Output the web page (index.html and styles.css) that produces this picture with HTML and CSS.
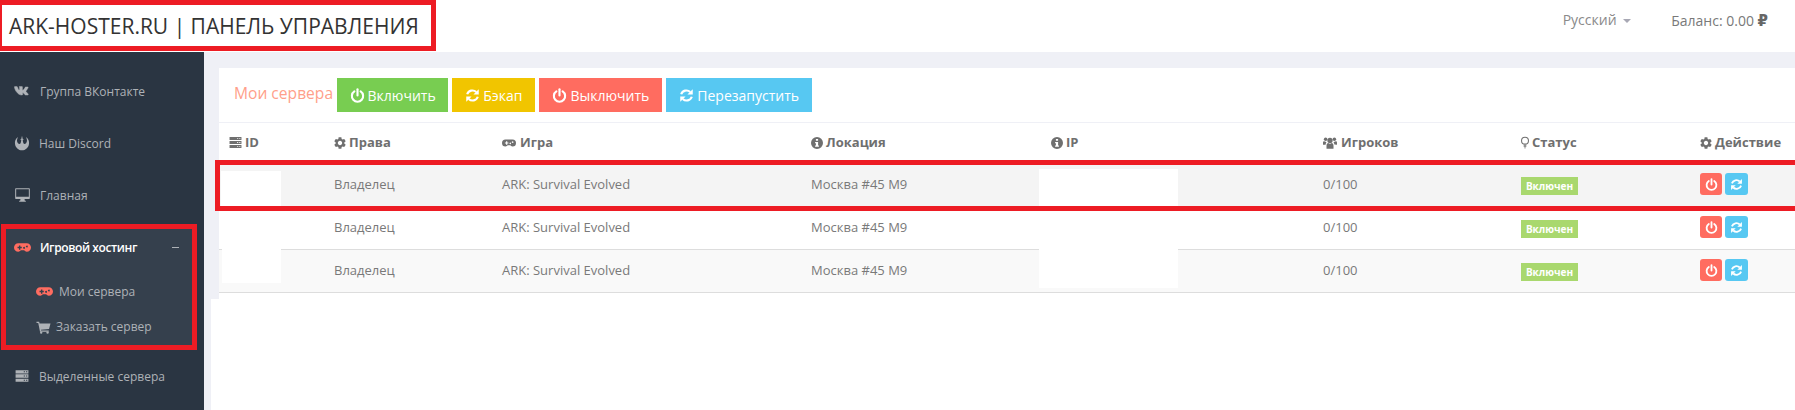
FILE: index.html
```html
<!DOCTYPE html>
<html lang="ru">
<head>
  <meta charset="UTF-8" />
  <meta name="viewport" content="width=device-width, initial-scale=1.0"/>
  <title>ARK-HOSTER.RU | Панель управления</title>
  <link rel="stylesheet" href="styles.css">
</head>
<body>
  <svg class="sprite" xmlns="http://www.w3.org/2000/svg">
    <symbol id="i-vk" viewBox="0 0 24 14"><path stroke="currentColor" stroke-width=".6" d="M1 .8h3.200c.3 0 .5.2.6.5.9 2.500 2 4.400 2.600 4.400.3 0 .4-.2.4-1V2.600c0-1-.6-1.100-.6-1.500 0-.2.2-.3.4-.3h3.800c.4 0 .5.2.5.6v4.100c0 .4.2.6.3.6.4 0 .8-.3 1.500-1.100 1.200-1.300 2-3.200 2-3.200.1-.3.3-.5.7-.5h3c.6 0 .7.3.6.7-.3 1.500-3.200 4.900-3.200 5.300 0 .3.100.5.400.800 2.500 2.500 3 3.500 3 4 0 .3-.2.6-.7.6h-3c-.8 0-1.200-.9-3-2.700-.5-.4-.7-.5-.9-.5-.3 0-.4.2-.4.700v1.800c0 .5-.2.7-1.500.7-2.600 0-5-1.500-6.900-4.300C2.300 7.500 1 4 .5 1.500.5 1.100.7.800 1 .8z"/></symbol>
    <symbol id="i-rebel" viewBox="0 0 24 24"><path d="M6 3C2 6 1 10 1.500 13 2 19 7 23 12 23s10-4 10.500-10c.5-3-.5-7-4.500-10 2 4 2 7 0 9.500-1.500 1.500-3.500 1-4-.5l-1-4 2-1-1.800-.5L12 1l-1.200 5.500L9 7l2 1-1 4c-.5 1.500-2.500 2-4 .5C4 10 4 7 6 3z"/></symbol>
    <symbol id="i-desktop" viewBox="0 0 24 24"><path fill-rule="evenodd" d="M2 2h20a1 1 0 0 1 1 1v14a1 1 0 0 1-1 1h-7l.5 2.500H17V22H7v-1.500h1.500L9 18H2a1 1 0 0 1-1-1V3a1 1 0 0 1 1-1zM2.500 3.500v11h19v-11z"/></symbol>
    <symbol id="i-gamepad" viewBox="0 0 24 12"><path fill-rule="evenodd" d="M6 0h12a6 6 0 0 1 0 12c-2 0-3-1.500-4-2h-4c-1 .5-2 2-4 2A6 6 0 0 1 6 0zM5 5v2h2v2h2V7h2V5H9V3H7v2zm10.500 1.500a1.300 1.300 0 1 0 0 .01zm4-2a1.300 1.300 0 1 0 0 .01z"/></symbol>
    <symbol id="i-cart" viewBox="0 0 24 24"><path d="M0 3h4.500l.8 3H24l-2.500 9.500-14 1 .4 1.500H21v2H6L3 5H0z"/><circle cx="8" cy="21.500" r="2"/><circle cx="19" cy="21.500" r="2"/></symbol>
    <symbol id="i-server" viewBox="0 0 24 24"><path fill-rule="evenodd" d="M1 2h22v5.500H1zM15 4v1.500h2V4zm4 0v1.500h2V4zM1 9.200h22v5.600H1zm14 2v1.500h2v-1.500zm4 0v1.500h2v-1.500zM1 16.500h22V22H1zm14 2V20h2v-1.500zm4 0V20h2v-1.500z"/></symbol>
    <symbol id="i-gear" viewBox="2 2 20 20"><path d="M19.140 12.940c.04-.3.06-.61.06-.94 0-.32-.02-.64-.07-.94l2.030-1.580c.18-.14.23-.41.12-.61l-1.920-3.320c-.12-.22-.37-.29-.59-.22l-2.390.96c-.5-.38-1.030-.7-1.620-.94l-.36-2.540c-.04-.24-.24-.41-.48-.41h-3.840c-.24 0-.43.17-.47.41l-.36 2.540c-.59.24-1.130.57-1.620.94l-2.390-.96c-.22-.08-.47 0-.59.22L2.740 8.870c-.12.21-.08.47.12.61l2.030 1.580c-.05.3-.09.63-.09.94s.02.64.07.94l-2.030 1.580c-.18.14-.23.41-.12.61l1.920 3.320c.12.22.37.29.59.22l2.390-.96c.5.38 1.030.7 1.620.94l.36 2.540c.05.24.24.41.48.41h3.840c.24 0 .44-.17.47-.41l.36-2.540c.59-.24 1.130-.56 1.620-.94l2.390.96c.22.08.47 0 .59-.22l1.920-3.320c.12-.22.07-.47-.12-.61l-2.010-1.580zM12 15.600c-1.980 0-3.600-1.620-3.600-3.600s1.620-3.600 3.600-3.600 3.600 1.620 3.600 3.600-1.620 3.600-3.600 3.600z"/></symbol>
    <symbol id="i-info" viewBox="1 1 22 22"><path fill-rule="evenodd" d="M12 1a11 11 0 1 1 0 22 11 11 0 0 1 0-22zM10 4.500V8h4V4.500zM8.500 10v2.500H10v4H8.500V19h7v-2.500H14V10z"/></symbol>
    <symbol id="i-users" viewBox="0 1 24 21"><circle cx="12" cy="8" r="4.500"/><circle cx="4.500" cy="6" r="3"/><circle cx="19.500" cy="6" r="3"/><path d="M6 22v-5c0-3 1.500-4.500 3-4.500 1 .8 2 1.200 3 1.200s2-.4 3-1.200c1.500 0 3 1.500 3 4.500v5zM0 15.500V12c0-2 1-2.500 2-2.500.8.500 1.700.8 2.500.8l1.500 1C5 12 4.500 13.500 4.500 15.500zM24 15.500V12c0-2-1-2.500-2-2.500-.8.500-1.700.8-2.500.8l-1.500 1c1 .7 1.500 2.200 1.500 3.700z"/></symbol>
    <symbol id="i-bulb" viewBox="4.500 1 15 22"><circle cx="12" cy="8.500" r="6.500" fill="none" stroke="currentColor" stroke-width="2"/><path d="M9.500 16h5v2h-5zM9.500 19h5v1.500h-5zM10.500 21.500h3V23h-3z"/></symbol>
    <symbol id="i-power" viewBox="0 0 24 24"><path d="M7 5.500a9 9 0 1 0 10 0" fill="none" stroke="currentColor" stroke-width="3.400" stroke-linecap="round"/><path d="M12 2v10" fill="none" stroke="currentColor" stroke-width="3.400" stroke-linecap="round"/></symbol>
    <symbol id="i-refresh" viewBox="0 0 24 24"><path d="M3.500 10A8.800 8.800 0 0 1 18 6.500M20.500 14A8.800 8.800 0 0 1 6 17.500" fill="none" stroke="currentColor" stroke-width="3.400"/><path d="M22 2v8.500h-8.500zM2 22v-8.500h8.500z"/></symbol>
  </svg>

  <header class="topbar">
    <div class="logo">ARK-HOSTER.RU | ПАНЕЛЬ УПРАВЛЕНИЯ</div>
    <div class="top-right">
      <span class="lang">Русский <i class="caret"></i></span>
      <span>Баланс: 0.00 <b class="rub">₽</b></span>
    </div>
  </header>

  <div class="layout">
    <nav class="sidebar">
      <a class="nav-item"><svg class="ico ico-vk"><use href="#i-vk"/></svg>Группа ВКонтакте</a>
      <a class="nav-item"><svg class="ico ico-rebel"><use href="#i-rebel"/></svg>Наш Discord</a>
      <a class="nav-item"><svg class="ico ico-desktop"><use href="#i-desktop"/></svg>Главная</a>

      <div class="nav-group">
        <a class="nav-head"><svg class="ico ico-pad"><use href="#i-gamepad"/></svg>Игровой хостинг<span class="minus"></span></a>
        <a class="sub-item sub-first"><svg class="ico ico-pad"><use href="#i-gamepad"/></svg>Мои сервера</a>
        <a class="sub-item"><svg class="ico ico-cart"><use href="#i-cart"/></svg>Заказать сервер</a>
      </div>

      <a class="nav-item"><svg class="ico ico-server"><use href="#i-server"/></svg>Выделенные сервера</a>
    </nav>

    <main class="main">
      <div class="content">
        <section class="panel">
          <div class="panel-head">
            <span class="panel-title">Мои сервера</span>
            <a class="btn btn-green"><svg class="btn-ico"><use href="#i-power"/></svg>Включить</a>
            <a class="btn btn-yellow"><svg class="btn-ico"><use href="#i-refresh"/></svg>Бэкап</a>
            <a class="btn btn-red"><svg class="btn-ico"><use href="#i-power"/></svg>Выключить</a>
            <a class="btn btn-blue"><svg class="btn-ico"><use href="#i-refresh"/></svg>Перезапустить</a>
          </div>

          <table class="servers">
            <colgroup>
              <col class="c-id"><col class="c-rights"><col class="c-game"><col class="c-loc">
              <col class="c-ip"><col class="c-players"><col class="c-status"><col class="c-act">
            </colgroup>
            <thead>
              <tr>
                <th><svg class="th-ico th-server"><use href="#i-server"/></svg>ID</th>
                <th><svg class="th-ico"><use href="#i-gear"/></svg>Права</th>
                <th><svg class="th-ico th-pad"><use href="#i-gamepad"/></svg>Игра</th>
                <th><svg class="th-ico"><use href="#i-info"/></svg>Локация</th>
                <th><svg class="th-ico"><use href="#i-info"/></svg>IP</th>
                <th><svg class="th-ico th-users"><use href="#i-users"/></svg>Игроков</th>
                <th><svg class="th-ico th-bulb"><use href="#i-bulb"/></svg>Статус</th>
                <th><svg class="th-ico"><use href="#i-gear"/></svg>Действие</th>
              </tr>
            </thead>
            <tbody>
              <tr class="row-a">
                <td></td><td>Владелец</td><td>ARK: Survival Evolved</td><td>Москва #45 M9</td><td></td><td>0/100</td>
                <td><span class="badge">Включен</span></td>
                <td><span class="acts"><a class="act act-red"><svg class="act-ico"><use href="#i-power"/></svg></a><a class="act act-blue"><svg class="act-ico"><use href="#i-refresh"/></svg></a></span></td>
              </tr>
              <tr>
                <td></td><td>Владелец</td><td>ARK: Survival Evolved</td><td>Москва #45 M9</td><td></td><td>0/100</td>
                <td><span class="badge">Включен</span></td>
                <td><span class="acts"><a class="act act-red"><svg class="act-ico"><use href="#i-power"/></svg></a><a class="act act-blue"><svg class="act-ico"><use href="#i-refresh"/></svg></a></span></td>
              </tr>
              <tr class="row-c">
                <td></td><td>Владелец</td><td>ARK: Survival Evolved</td><td>Москва #45 M9</td><td></td><td>0/100</td>
                <td><span class="badge">Включен</span></td>
                <td><span class="acts"><a class="act act-red"><svg class="act-ico"><use href="#i-power"/></svg></a><a class="act act-blue"><svg class="act-ico"><use href="#i-refresh"/></svg></a></span></td>
              </tr>
            </tbody>
          </table>

          <!-- white patches hiding ids and ips -->
          <div class="patch patch-id1"></div>
          <div class="patch patch-id3"></div>
          <div class="patch patch-ip1"></div>
          <div class="patch patch-ip2"></div>
          <div class="row-mark"></div>
        </section>
      </div>
      <div class="below"></div>
    </main>
  </div>
</body>
</html>
```

FILE: styles.css
```css
html, body {
  margin: 0;
  height: 100%;
  overflow: hidden;
}

body {
  font-family: "Open Sans", "DejaVu Sans", sans-serif;
  font-size: 12px;
  color: #797979;
  background: #fff;
  display: flex;
  flex-direction: column;
}

.sprite {
  display: none;
}

/* top bar */
.topbar {
  height: 52px;
  flex: none;
  display: flex;
  justify-content: space-between;
  background: #fff;
}

.logo {
  box-sizing: border-box;
  width: 436px;
  height: 51px;
  border: 5px solid #ed1c24;
  border-left-width: 2px;
  padding-left: 7px;
  display: flex;
  align-items: center;
  font-size: 21px;
  color: #333;
  white-space: nowrap;
}

.top-right {
  display: flex;
  gap: 40px;
  padding: 11px 27px 0 0;
  font-size: 14px;
  line-height: 18px;
}

.lang {
  color: #8a8a8a;
}

.rub {
  font-size: 15px;
  color: #666;
}

.caret {
  display: inline-block;
  margin-left: 3px;
  vertical-align: middle;
  border-top: 4px solid #a8a8b4;
  border-left: 4px solid transparent;
  border-right: 4px solid transparent;
}

/* layout */
.layout {
  flex: 1;
  display: flex;
  min-height: 0;
}

.sidebar {
  width: 204px;
  flex: none;
  box-sizing: border-box;
  padding-top: 13px;
  background: #2a3542;
  color: #aeb2b7;
}

.nav-item {
  height: 52px;
  display: flex;
  align-items: center;
  padding-left: 14px;
}

.ico {
  flex: none;
  fill: currentColor;
}

.ico-vk {
  width: 17px;
  height: 10px;
  margin-right: 9px;
}

.ico-rebel {
  width: 16px;
  height: 16px;
  margin-right: 9px;
}

.ico-desktop {
  width: 17px;
  height: 16px;
  margin-right: 9px;
}

.ico-pad {
  width: 17px;
  height: 9px;
  margin-right: 9px;
  color: #ff6c60;
}

.ico-cart {
  width: 15px;
  height: 14px;
  margin-right: 5px;
}

.ico-server {
  width: 16px;
  height: 14px;
  margin-right: 9px;
}

.nav-group {
  box-sizing: border-box;
  width: 196px;
  height: 126px;
  margin: 3px 0 0 1px;
  border: 5px solid #ed1c24;
  background: #35404d;
}

.nav-head {
  height: 37px;
  display: flex;
  align-items: center;
  padding-left: 8px;
  color: #fff;
  font-weight: 600;
  letter-spacing: -.4px;
}

.minus {
  width: 7px;
  height: 1px;
  margin-left: auto;
  margin-right: 13px;
  background: #aeb2b7;
}

.sub-item {
  height: 35px;
  display: flex;
  align-items: center;
  padding-left: 30px;
}

.sub-item .ico-pad {
  margin-right: 6px;
}

.sub-first {
  margin-top: 8px;
}

/* content */
.main {
  flex: 1;
  min-width: 0;
  display: flex;
  flex-direction: column;
  background: #eff0f6;
}

.content {
  height: 247px;
  flex: none;
  box-sizing: border-box;
  padding: 16px 0 0 15px;
}

.below {
  flex: 1;
  margin-left: 7px;
  background: #fff;
}

.panel {
  position: relative;
  height: 100%;
  background: #fff;
}

.panel-head {
  box-sizing: border-box;
  height: 55px;
  padding-top: 10px;
  padding-left: 15px;
  display: flex;
  align-items: flex-start;
  gap: 4px;
  border-bottom: 1px solid #eff0f6;
}

.panel-title {
  line-height: 30px;
  font-size: 15.6px;
  color: #ff9f8a;
}

.btn {
  height: 34px;
  padding: 0 13px;
  display: flex;
  align-items: center;
  font-size: 14px;
  color: #fff;
}

.btn-ico {
  width: 15px;
  height: 15px;
  margin-right: 3px;
  fill: currentColor;
}

.btn-green { background: #78cd51; padding: 0 12.5px; }
.btn-yellow { background: #f1c500; }
.btn-red { background: #ff6c60; }
.btn-blue { background: #57c8f2; }

/* table */
.servers {
  width: 1576px;
  table-layout: fixed;
  border-collapse: collapse;
}

.c-id { width: 105px; }
.c-rights { width: 168px; }
.c-game { width: 309px; }
.c-loc { width: 240px; }
.c-ip { width: 272px; }
.c-players { width: 198px; }
.c-status { width: 179px; }
.c-act { width: 105px; }

.servers th {
  height: 38px;
  padding: 0 0 2px 10px;
  text-align: left;
  font-size: 13px;
  font-weight: 700;
  color: #6f6f6f;
  border-bottom: 1px solid transparent;
}

.servers td {
  height: 40px;
  padding: 0 0 2px 10px;
  font-size: 13px;
  border-bottom: 1px solid #ddd;
}

.row-a { background: #f4f4f4; }
.row-c { background: #f9f9f9; }

.th-ico {
  width: 12px;
  height: 12px;
  margin-right: 3px;
  vertical-align: -2px;
  fill: currentColor;
}

.th-server {
  width: 13px;
  height: 13px;
}

.th-pad {
  width: 14px;
  height: 8px;
  margin-right: 4px;
  vertical-align: 0;
}

.th-users {
  width: 14px;
  height: 13px;
  margin-right: 4px;
}

.th-bulb {
  width: 8px;
  height: 13px;
}

.badge {
  display: inline-block;
  width: 57px;
  height: 18px;
  margin-top: 3px;
  line-height: 18px;
  text-align: center;
  font-size: 10px;
  font-weight: 700;
  color: #fff;
  background: #a9d86e;
  vertical-align: middle;
}

.acts {
  display: flex;
  gap: 3px;
}

.act {
  width: 22px;
  height: 22px;
  border-radius: 3px;
  display: flex;
  align-items: center;
  justify-content: center;
  color: #fff;
}

.act-blue {
  width: 23px;
  background: #57c8f2;
}

.act-red { background: #ff6c60; }

.act-ico {
  width: 13px;
  height: 13px;
  fill: currentColor;
}

/* overlays on top of the table */
.patch {
  position: absolute;
  background: #fff;
}

.patch-id1 { left: 2px; top: 103px; width: 60px; height: 35px; }
.patch-id3 { left: 3px; top: 180px; width: 59px; height: 35px; }
.patch-ip1 { left: 820px; top: 101px; width: 139px; height: 37px; }
.patch-ip2 { left: 820px; top: 138px; width: 139px; height: 82px; }

.row-mark {
  position: absolute;
  left: -4px;
  right: 0;
  top: 92px;
  height: 51px;
  box-sizing: border-box;
  border: 5px solid #ed1c24;
  border-right: none;
}
```
